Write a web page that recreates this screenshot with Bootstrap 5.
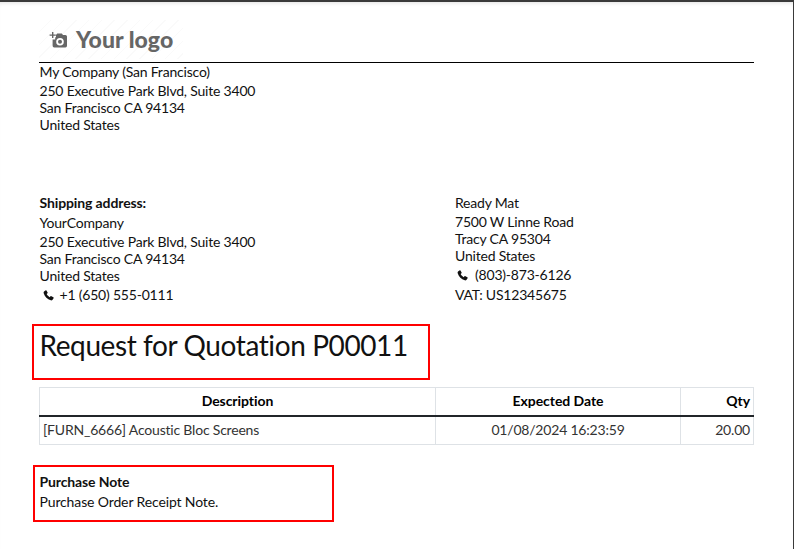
<!DOCTYPE html>
<html lang="en">
<head>
<meta charset="utf-8">
<title>Request for Quotation P00011</title>
<link href="https://cdn.jsdelivr.net/npm/bootstrap@5.3.0/dist/css/bootstrap.min.css" rel="stylesheet">
<style>
html,body{height:549px;overflow:hidden;background:#fff}
body{font-family:"Lato","Liberation Sans",sans-serif;font-size:14px;letter-spacing:-.2px;color:#111;font-variant-ligatures:none}
.sheet{height:549px;border-top:2px solid #3a3a3a;border-right:1px solid #3a3a3a;padding:0 39px 0 39px;box-shadow:inset 0 4px 4px -3px rgba(0,0,0,.12)}
.logo-box{width:144px;height:39px;margin-top:18px;padding-left:10px;color:#666;font-size:23px;letter-spacing:.05px;font-weight:900;line-height:39px;background:repeating-linear-gradient(135deg,#fff 0 8px,#fafafa 8px 9px)}
.logo-box svg{width:18px;height:16px;flex:none}
.logo-word{margin-left:1px}
.head-rule{border-top:1px solid #000;margin-top:3px;height:0}
.ln{line-height:16px;padding-bottom:1px;padding-left:.5px}
.first-ln{line-height:18px;padding-bottom:2px;padding-left:.5px}
.gap-a{margin-top:2px}
.gap-b{margin-top:3px}
.addr-row{margin-top:61px}
.col-left{width:416px}
.col-right{flex:1}
.col-right .ln{padding-left:0}
.phone svg{width:11px;height:11px;margin:0 6px 0 3px}
.col-right .phone svg{margin:0 7.500px 0 1.500px}
.title-box{width:398px;height:56px;margin:20px 0 7px -7px;border:2px solid #f00;padding:0 0 0 5.500px}
.title-box h2{font-size:28px;letter-spacing:-.4px;font-weight:400;line-height:39px;padding-bottom:1px;margin:0;color:#111}
.quote-table{width:715px;margin:0;table-layout:fixed;border-collapse:collapse;--bs-table-color:#333;color:#333}
.quote-table th,.quote-table td{border:1px solid #dee2e6;padding:0 3px 2px;height:29px;vertical-align:middle}
.quote-table th{color:#000;font-weight:700;letter-spacing:-.05px;height:28px;border-bottom:2px solid #212529}
.col-desc{width:396px}
.col-date{width:245px}
.note-box{width:301px;height:57px;margin:20px 0 0 -6px;border:2px solid #f00;padding:7px 0 0 4px}
.bold-ln{font-weight:700;letter-spacing:-.12px}
.note-text{letter-spacing:-.13px}
</style>
</head>
<body>
<div class="sheet">
  <div class="logo-box d-flex align-items-center gap-2">
    <svg viewBox="0 0 18 16" fill="#666" aria-hidden="true"><path d="M3 0h1.400v2.400h2.400v1.300H4.400v2.400H3V3.700H.6V2.400H3z"/><path d="M7 3 8.200 1.600h4.600L14 3h2.400A1.600 1.600 0 0 1 18 4.600v9.200a1.600 1.600 0 0 1-1.600 1.600H5.200A1.600 1.600 0 0 1 3.600 13.800V7.500H6.200V5.200H7zM11 6a3.800 3.800 0 1 0 0 7.600A3.800 3.800 0 0 0 11 6zm0 1.800a2 2 0 1 1 0 4 2 2 0 0 1 0-4z"/></svg>
    <span class="logo-word">Your logo</span>
  </div>
  <div class="head-rule"></div>
  <div>
    <div class="first-ln">My Company (San Francisco)</div>
    <div class="ln">250 Executive Park Blvd, Suite 3400</div>
    <div class="ln">San Francisco CA 94134</div>
    <div class="ln">United States</div>
  </div>
  <div class="addr-row d-flex">
    <div class="col-left">
      <div class="ln bold-ln">Shipping address:</div>
      <div class="ln gap-b">YourCompany</div>
      <div class="ln gap-a">250 Executive Park Blvd, Suite 3400</div>
      <div class="ln">San Francisco CA 94134</div>
      <div class="ln">United States</div>
      <div class="ln gap-a phone d-flex align-items-center"><svg viewBox="0 0 16 16" fill="#111" aria-hidden="true"><path d="M3.600.600 1.500 2.100C.800 2.700.700 3.700 1 4.700c1.700 5 5.300 8.600 10.300 10.300 1 .3 2-.1 2.600-.8l1.500-2.100c.3-.5.200-1.100-.3-1.400l-2.900-1.700c-.4-.3-1-.2-1.300.2l-1 1.200c-2-.9-3.700-2.600-4.600-4.600l1.200-1c.4-.3.500-.9.200-1.300L5 .9C4.700.4 4.100.300 3.600.600z"/></svg><span>+1 (650) 555-0111</span></div>
    </div>
    <div class="col-right">
      <div class="ln">Ready Mat</div>
      <div class="ln gap-a">7500 W Linne Road</div>
      <div class="ln">Tracy CA 95304</div>
      <div class="ln">United States</div>
      <div class="ln gap-a phone d-flex align-items-center"><svg viewBox="0 0 16 16" fill="#111" aria-hidden="true"><path d="M3.600.600 1.500 2.100C.800 2.700.700 3.700 1 4.700c1.700 5 5.300 8.600 10.300 10.300 1 .3 2-.1 2.600-.8l1.500-2.100c.3-.5.200-1.100-.3-1.400l-2.900-1.700c-.4-.3-1-.2-1.300.2l-1 1.200c-2-.9-3.700-2.600-4.600-4.600l1.200-1c.4-.3.500-.9.200-1.300L5 .9C4.700.4 4.100.300 3.600.600z"/></svg><span>(803)-873-6126</span></div>
      <div class="ln gap-b">VAT: US12345675</div>
    </div>
  </div>
  <div class="title-box"><h2>Request for Quotation P00011</h2></div>
  <table class="table quote-table">
    <thead>
      <tr><th class="text-center col-desc">Description</th><th class="text-center col-date">Expected Date</th><th class="text-end">Qty</th></tr>
    </thead>
    <tbody>
      <tr><td>[FURN_6666] Acoustic Bloc Screens</td><td class="text-center">01/08/2024 16:23:59</td><td class="text-end">20.00</td></tr>
    </tbody>
  </table>
  <div class="note-box">
    <div class="ln bold-ln">Purchase Note</div>
    <div class="ln gap-b note-text">Purchase Order Receipt Note.</div>
  </div>
</div>
</body>
</html>
